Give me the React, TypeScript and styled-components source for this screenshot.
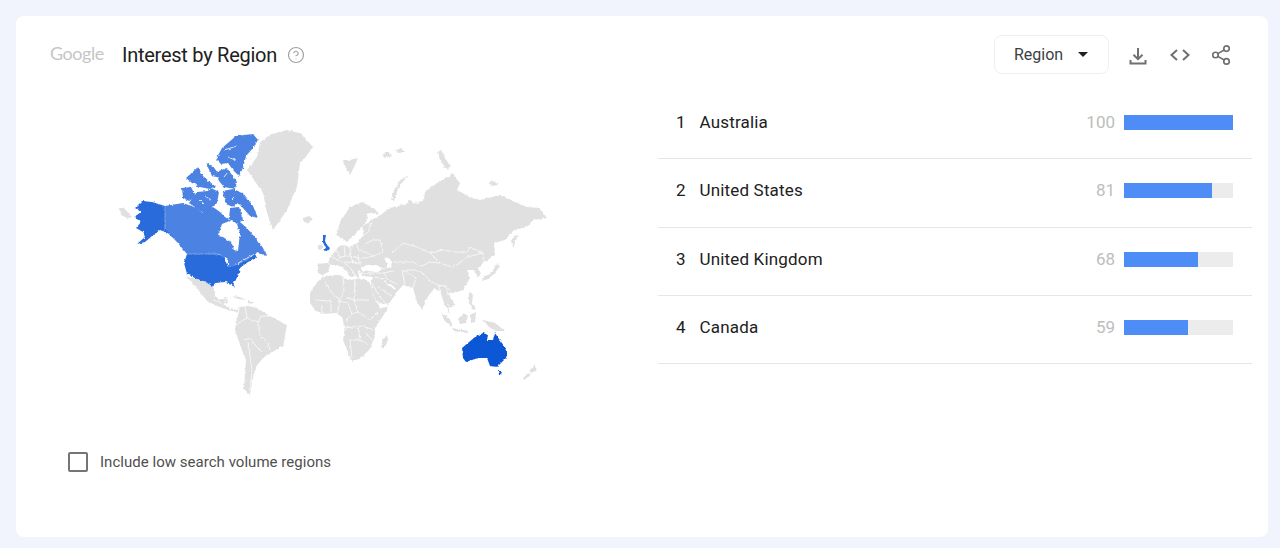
import React from "react";
import styled, { createGlobalStyle } from "styled-components";
import { CircleHelp, Share2 } from "lucide-react";

const Global = createGlobalStyle`
  html, body { margin: 0; padding: 0; background: #f1f3fd; }
  body { font-family: Roboto, "Open Sans", sans-serif; }
`;

const Page = styled.div`
  padding: 16px 12px 11px 16px;
`;

const Card = styled.section`
  height: 521px;
  background: #fff;
  border-radius: 8px;
  overflow: hidden;
`;

const Header = styled.header`
  display: flex;
  align-items: center;
  height: 39px;
  padding: 19px 36px 17px 34px;
`;

const Logo = styled.span`
  width: 72px;
  margin-top: -3px;
  font-family: Lato, sans-serif;
  font-size: 18px;
  letter-spacing: -0.45px;
  color: #c6c6c6;
`;

const Title = styled.h2`
  margin: 0;
  font-size: 20px;
  font-weight: 400;
  letter-spacing: -0.26px;
  color: #212121;
`;

const HelpButton = styled.span`
  display: flex;
  margin-left: 10px;
  color: #a3a3a3;
`;

const Actions = styled.div`
  display: flex;
  align-items: center;
  margin-left: auto;
`;

const Select = styled.div`
  box-sizing: border-box;
  display: flex;
  align-items: center;
  width: 115px;
  height: 39px;
  padding-left: 19px;
  margin-right: 18px;
  border: 1px solid #eceff1;
  border-radius: 8px;
  font-size: 16px;
  color: #3c4043;
`;

const Caret = styled.span`
  width: 0;
  height: 0;
  margin-left: 15px;
  border-left: 5px solid transparent;
  border-right: 5px solid transparent;
  border-top: 5px solid #212121;
`;

const IconButton = styled.span<{ $gap: number; $top: number }>`
  display: flex;
  width: 22px;
  justify-content: center;
  margin-left: ${(p) => p.$gap}px;
  margin-top: ${(p) => p.$top}px;
  color: #707070;
`;

const Body = styled.div`
  display: flex;
`;

const MapColumn = styled.div`
  width: 642px;
  flex: none;
`;

const MapSvg = styled.svg`
  display: block;
  width: 460px;
  height: 290px;
  margin: 29px 0 0 84px;
`;

const CheckRow = styled.label`
  display: flex;
  align-items: center;
  gap: 12px;
  margin: 42px 0 0 52px;
  font-size: 15px;
  letter-spacing: 0.03px;
  color: #4f4f4f;
`;

const CheckBox = styled.span`
  box-sizing: border-box;
  width: 20px;
  height: 20px;
  border: 2px solid #757575;
  border-radius: 2px;
`;

const RankList = styled.ol`
  list-style: none;
  width: 594px;
  margin: 0;
  padding: 0;
`;

const Row = styled.li`
  box-sizing: border-box;
  display: flex;
  align-items: flex-start;
  height: 68.33px;
  padding: 21px 19px 0 18px;
  border-bottom: 1px solid #e6e6e6;
  font-size: 17px;
  line-height: 20px;
  color: #212121;
`;

const Rank = styled.span`
  width: 23.5px;
`;

const Name = styled.span`
  flex: 1;
  letter-spacing: 0.17px;
`;

const Value = styled.span`
  color: #bdbdbd;
  margin-right: 9px;
`;

const Track = styled.div`
  width: 109px;
  height: 15px;
  margin-top: 3px;
  background: #ececec;
`;

const Fill = styled.div`
  height: 100%;
  background: #4e8df5;
`;

const land = [
  // Eurasia
  "M318,273 L318,264 L328,263 L331,256 L336,250 L339,246 L344,245 L350,247 L357,243 L361,237 L364,231 L362,226 L368,223 L372,219 L379,216 L390,208 L402,205 L408,203 L411,195 L417,203 L424,200 L425,192 L437,183 L450,176 L452,172 L460,183 L457,190 L470,197 L480,200 L500,195 L515,202 L527,207 L540,208 L547,218 L533,220 L527,227 L514,230 L505,240 L494,243 L495,255 L483,263 L478,268 L481,275 L477,277 L474,270 L467,270 L470,278 L463,290 L455,293 L448,293 L455,305 L449,307 L447,300 L450,315 L444,303 L440,291 L433,289 L426,300 L422,310 L417,302 L413,288 L403,285 L397,292 L388,305 L377,302 L372,290 L371,283 L373,277 L362,276 L361,272 L358,270 L359,280 L354,272 L349,266 L355,276 L351,277 L343,267 L336,265 L330,265 L328,272 L322,275 Z",
  // Scandinavia
  "M336,235 L340,222 L350,207 L362,202 L375,209 L379,215 L368,212 L366,222 L357,232 L347,242 L340,237 Z",
  // Greenland
  "M260,142 L272,134 L287,130 L300,133 L313,147 L305,158 L300,163 L297,187 L287,210 L273,230 L267,213 L263,193 L247,170 L257,157 Z",
  // Iceland
  "M303,218 L309,216 L313,219 L308,223 L304,222 Z",
  // Ireland
  "M318,245 L322,244 L322,249 L318,250 Z",
  // Svalbard
  "M343,160 L350,160 L358,158 L355,165 L350,175 L346,168 Z",
  // Novaya Zemlya
  "M391,200 L394,190 L400,180 L408,176 L402,183 L397,192 L394,201 Z",
  // Severnaya / arctic isles
  "M437,152 L441,150 L445,158 L451,166 L447,170 L441,162 Z",
  "M489,182 L494,181 L498,185 L492,186 Z",
  "M382,155 L388,152 L392,156 L385,158 Z M396,150 L402,148 L404,152 L398,153 Z",
  // Kamchatka
  "M518,235 L513,248 L511,241 L514,236 Z",
  // Bering tip
  "M119,208 L124,208 L132,217 L127,219 L121,214 Z",
  // Japan
  "M498,263 L500,266 L494,274 L488,279 L482,281 L483,277 L490,274 Z",
  // Philippines, Indonesia, PNG
  "M469,292 L473,295 L472,302 L476,310 L472,309 L469,301 Z",
  "M442,313 L449,318 L453,326 L450,326 L444,320 Z",
  "M458,319 L464,313 L468,316 L466,323 L460,324 Z",
  "M470,315 L476,312 L475,322 L471,323 Z",
  "M452,328 L468,331 L468,333 L454,331 Z",
  "M483,320 L495,323 L505,331 L496,331 L489,327 Z",
  // New Zealand
  "M535,365 L537,370 L531,373 L530,370 Z M529,373 L531,375 L524,380 L523,378 Z",
  // Madagascar
  "M387,335 L388,340 L384,349 L381,347 L382,340 Z",
  // Africa
  "M310,293 L316,283 L323,277 L334,275 L340,275 L348,280 L358,279 L367,280 L370,283 L372,291 L377,303 L380,308 L388,307 L383,316 L375,328 L375,336 L370,349 L362,357 L352,362 L349,355 L343,340 L345,327 L342,317 L336,313 L322,314 L315,310 L310,303 Z",
  // South America
  "M236,323 L240,307 L248,306 L257,308 L270,316 L287,325 L283,346 L272,352 L263,358 L255,368 L252,382 L250,395 L244,389 L245,372 L246,360 L242,350 L235,330 Z",
  // Mexico / Central America
  "M187,277 L197,279 L206,282 L213,287 L215,296 L220,300 L227,297 L228,302 L223,304 L230,308 L237,310 L240,307 L237,312 L228,310 L217,306 L207,301 L200,292 L193,284 Z",
  // Cuba, Hispaniola
  "M232,296 L240,297 L246,300 L238,299 Z M248,301 L254,301 L253,304 L248,303 Z",
];

const seas = [
  // Black Sea
  "M361,267 L368,265 L376,265 L382,269 L378,272 L368,271 L362,271 Z",
  // Caspian
  "M384,258 L388,257 L392,262 L391,268 L387,268 L387,263 Z",
  // Persian Gulf
  "M389,283 L393,286 L397,290 L393,289 L389,286 Z",
  // Baltic
  "M346,244 L352,241 L358,233 L361,229 L364,235 L358,240 L352,245 Z",
  // White Sea
  "M408,198 L412,191 L417,197 L415,204 Z",
];

const borders = [
  // Red Sea
  "M372,283 L379,296 L386,304",
  // Europe
  "M330,256 L336,259 L342,262 M328,263 L331,265 M336,250 L340,258 M344,245 L345,256 M350,247 L351,256 M356,243 L359,250 L358,258",
  "M336,259 L345,256 L351,256 L358,258 L366,258 L374,256 L383,252",
  "M345,262 L354,262 L362,264 M351,256 L353,264 M358,258 L360,265 M342,262 L349,266",
  "M361,237 L368,232 L372,222 M364,245 L372,240 L380,240 L383,252 M360,250 L374,256",
  // Turkey / Caucasus / Middle East
  "M362,274 L372,273 L383,273 L393,271 M382,269 L386,268 M374,277 L384,279 L388,286 M384,273 L388,280 L397,284 M378,287 L392,296 M402,270 L405,285 M403,270 L416,278 L413,288",
  // Kazakhstan, Russia, Mongolia, China
  "M392,253 L403,243 L417,247 L430,253 L443,250 L455,252 L467,252 L470,247 L483,253 L484,262",
  "M430,253 L440,263 L453,267 L467,257 L483,253",
  "M393,262 L412,262 L422,266 L430,262 L440,263",
  "M405,270 L415,270 L424,274 L430,281 L438,285 L446,286 L452,293 M438,285 L441,293 M446,286 L448,296",
  // Africa
  "M323,278 L331,292 L340,300 M343,276 L344,292 L340,300 L338,312 M355,280 L354,300 M370,300 L354,300 L346,298 M315,300 L331,301 L331,312 M338,301 L348,303 L352,314 L345,322 M354,300 L358,312 L370,320 L378,312 M352,314 L358,312 M345,328 L360,326 L368,328 L375,330 M358,326 L360,340 L350,340 L352,358 M360,340 L368,344 M366,333 L372,340 M322,305 L322,313",
  // South America
  "M245,306 L247,318 L240,322 L236,325 M247,318 L258,322 L262,316 M258,322 L260,336 L268,343 L270,350 M244,340 L250,338 L256,346 L262,352 M248,342 L252,370 L250,390 M262,316 L272,316",
  // Mexico
  "M227,297 L225,302 M213,300 L222,303",
];

const canadaIslands = [
  // Ellesmere
  "M216,159 L222,148 L236,136 L253,134 L258,140 L253,148 L246,156 L243,168 L239,176 L233,170 L228,163 L221,164 Z",
  // Axel Heiberg
  "M206,163 L213,166 L221,178 L212,176 Z",
  // Devon
  "M216,172 L227,168 L237,182 L235,189 L224,187 L219,181 Z",
  // Melville, Bathurst
  "M186,178 L198,167 L203,176 L216,187 L210,189 L200,187 L192,183 Z",
  // Banks
  "M182,188 L191,187 L196,197 L189,201 L183,198 Z",
  // Victoria
  "M197,192 L208,191 L213,189 L219,192 L217,203 L211,209 L205,214 L189,203 Z",
  // Baffin
  "M223,191 L233,189 L243,193 L253,206 L258,218 L250,216 L243,208 L238,203 L233,207 L226,204 Z",
  // Southampton
  "M230,208 L239,207 L243,220 L237,224 L229,219 Z",
];

const canadaMain =
  "M165,206 L177,204 L183,203 L197,208 L203,213 L213,207 L220,212 L225,217 L232,222 L240,222 L247,228 L253,235 L258,241 L263,248 L267,256 L261,254 L257,253 L247,260 L233,266 L228,267 L228,260 L219,254 L187,254 L177,242 L165,230 Z";

const channels = [
  "M224,150 L237,146",
  "M228,157 L235,160",
  "M228,172 L224,177",
  "M235,197 L232,200",
  "M205,196 L211,200",
  "M200,200 L204,204",
  "M257,253 L247,258 L235,265",
];

const hudson =
  "M218,236 L222,224 L232,220 L237,224 L240,233 L238,251 L234,250 L232,243 L223,237 Z";

const alaska =
  "M135,208 L142,201 L152,202 L165,206 L165,229 L174,238 L168,233 L160,230 L152,236 L145,242 L137,244 L145,237 L143,232 L136,228 L141,222 L134,217 L141,212 Z";

const usa =
  "M187,254 L218,254 L224,257 L228,267 L233,266 L247,260 L255,254 L257,258 L248,262 L240,268 L238,277 L233,282 L235,288 L232,284 L225,282 L215,283 L213,287 L206,282 L197,279 L187,274 L184,263 Z";

const australia =
  "M462,348 L475,337 L483,333 L488,335 L487,340 L493,340 L495,333 L499,339 L507,350 L507,357 L500,364 L497,367 L490,366 L487,358 L478,358 L466,362 L463,358 Z";

const tasmania = "M498,371 L502,371 L501,375 L499,375 Z";

const uk =
  "M323,235 L326,235 L325,241 L327,245 L330,248 L329,250 L324,251 L326,247 L323,244 Z";

const WorldMap = () => (
  <MapSvg viewBox="100 120 460 290" aria-hidden="true">
    <defs>
      <filter id="coast" x="0" y="0" width="100%" height="100%" colorInterpolationFilters="sRGB">
        <feTurbulence type="fractalNoise" baseFrequency="0.35" numOctaves="2" seed="4" result="n" />
        <feDisplacementMap in="SourceGraphic" in2="n" scale="3" xChannelSelector="R" yChannelSelector="G" />
        <feGaussianBlur stdDeviation="0.35" />
      </filter>
    </defs>
    <g filter="url(#coast)">
      <g fill="#e0e0e0">
        {land.map((d) => (
          <path key={d} d={d} />
        ))}
      </g>
      <g fill="#fff">
        {seas.map((d) => (
          <path key={d} d={d} />
        ))}
      </g>
      <g fill="none" stroke="#fff" strokeWidth="0.7">
        {borders.map((d) => (
          <path key={d} d={d} />
        ))}
      </g>
      <g fill="#4c82e2">
        {canadaIslands.map((d) => (
          <path key={d} d={d} />
        ))}
        <path d={canadaMain} />
      </g>
      <path d={hudson} fill="#fff" />
      <g fill="none" stroke="#fff" strokeWidth="0.8">
        {channels.map((d) => (
          <path key={d} d={d} />
        ))}
      </g>
      <g fill="#2a6bdc">
        <path d={alaska} />
        <path d={usa} />
        <path d={uk} />
      </g>
      <path d="M187,254 L218,254 M165,206 L165,230" fill="none" stroke="#a9c3f0" strokeWidth="0.6" />
      <g fill="#0c57d6">
        <path d={australia} />
        <path d={tasmania} />
      </g>
    </g>
  </MapSvg>
);

const DownloadIcon = () => (
  <svg width="20" height="20" viewBox="0 0 20 20" fill="none" stroke="currentColor" strokeWidth="2">
    <path d="M10 2v11M5.500 8.800 10 13.200l4.500-4.400M2.500 14v3.500h15V14" />
  </svg>
);

const CodeIcon = () => (
  <svg width="22" height="14" viewBox="0 0 22 14" fill="none" stroke="currentColor" strokeWidth="2">
    <path d="M8 2 2.500 7 8 12M14 2l5.500 5L14 12" />
  </svg>
);

const rows = [
  { name: "Australia", value: 100 },
  { name: "United States", value: 81 },
  { name: "United Kingdom", value: 68 },
  { name: "Canada", value: 59 },
];

export default function App() {
  return (
    <Page>
      <Global />
      <Card>
        <Header>
          <Logo>Google</Logo>
          <Title>Interest by Region</Title>
          <HelpButton>
            <CircleHelp size={18} strokeWidth={1.6} />
          </HelpButton>
          <Actions>
            <Select>
              Region
              <Caret />
            </Select>
            <IconButton $gap={0} $top={2}>
              <DownloadIcon />
            </IconButton>
            <IconButton $gap={20} $top={1}>
              <CodeIcon />
            </IconButton>
            <IconButton $gap={19} $top={0}>
              <Share2 size={22} strokeWidth={1.8} />
            </IconButton>
          </Actions>
        </Header>
        <Body>
          <MapColumn>
            <WorldMap />
            <CheckRow>
              <CheckBox />
              Include low search volume regions
            </CheckRow>
          </MapColumn>
          <RankList>
            {rows.map((r, i) => (
              <Row key={r.name}>
                <Rank>{i + 1}</Rank>
                <Name>{r.name}</Name>
                <Value>{r.value}</Value>
                <Track>
                  <Fill style={{ width: `${r.value}%` }} />
                </Track>
              </Row>
            ))}
          </RankList>
        </Body>
      </Card>
    </Page>
  );
}
